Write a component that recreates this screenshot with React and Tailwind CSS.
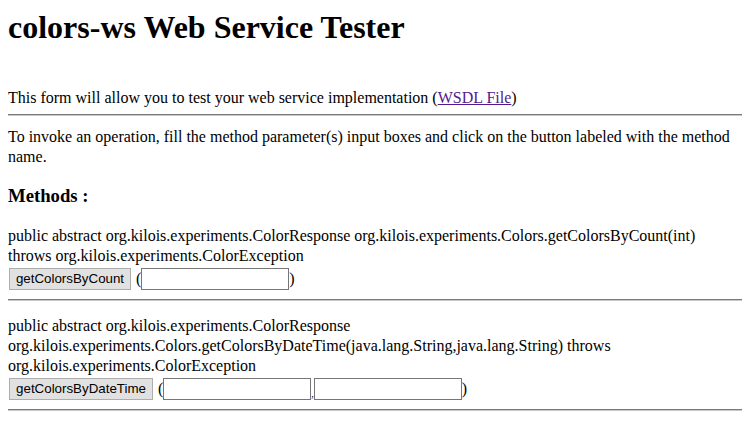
export default function App() {
  const serif = "font-['Liberation_Serif','Times_New_Roman',serif]";
  const btn =
    "ml-px h-[22px] border border-[#adadad] bg-[#e1e1e1] text-[13.33px] leading-none text-black font-['Liberation_Sans',Arial,sans-serif] flex items-center justify-center";
  const input = "h-[22px] w-[148px] border border-[#767676] bg-white";
  const Hr = ({ cls }) => (
    <div className={`h-0 border-t border-b border-t-[#7a7a7a] border-b-[#c8c8c8] ${cls}`} />
  );
  return (
    <div className={`min-h-[430px] bg-white px-2 pt-[9px] text-[16px] leading-[20px] text-black ${serif}`}>
      <h1 className="text-[32px] leading-[36px] font-bold">colors-ws Web Service Tester</h1>
      <p className="mt-[43px] whitespace-nowrap">
        This form will allow you to test your web service implementation (
        <a href="#" className="text-[#551a8b] underline">WSDL File</a>)
      </p>
      <Hr cls="mt-[6px]" />
      <p className="mt-[11px] whitespace-nowrap">
        To invoke an operation, fill the method parameter(s) input boxes and click on the button labeled with the method
        <br />
        name.
      </p>
      <h3 className="mt-[18px] text-[18.72px] leading-[22px] font-bold">Methods :</h3>
      <p className="mt-[19px] whitespace-nowrap">
        public abstract org.kilois.experiments.ColorResponse org.kilois.experiments.Colors.getColorsByCount(int)
        <br />
        throws org.kilois.experiments.ColorException
      </p>
      <div className="mt-[2px] flex items-center">
        <button className={`${btn} w-[122px]`}>getColorsByCount</button>
        <span className="ml-[5px]">(</span>
        <span className={input} />
        <span>)</span>
      </div>
      <Hr cls="mt-[9px]" />
      <p className="mt-[15px] whitespace-nowrap">
        public abstract org.kilois.experiments.ColorResponse
        <br />
        org.kilois.experiments.Colors.getColorsByDateTime(java.lang.String,java.lang.String) throws
        <br />
        org.kilois.experiments.ColorException
      </p>
      <div className="mt-[2px] flex items-center">
        <button className={`${btn} w-[144px]`}>getColorsByDateTime</button>
        <span className="ml-[5px]">(</span>
        <span className={input} />
        <span className="self-end text-[10px] leading-[12px]">,</span>
        <span className={input} />
        <span>)</span>
      </div>
      <Hr cls="mt-[9px]" />
    </div>
  );
}
